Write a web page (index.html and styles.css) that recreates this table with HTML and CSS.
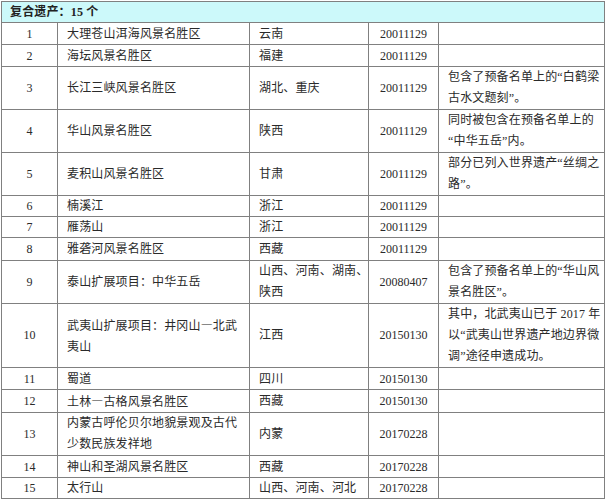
FILE: index.html
```html
<!DOCTYPE html>
<html lang="zh-CN">
<head>
<meta charset="utf-8">
<title>复合遗产</title>
<link rel="stylesheet" href="styles.css">
</head>
<body>
<table class="heritage">
  <colgroup>
    <col class="c-no"><col class="c-name"><col class="c-prov"><col class="c-date"><col class="c-note">
  </colgroup>
  <tr class="head one r21"><th colspan="5">复合遗产：15 个</th></tr>
  <tr class="one r22"><td class="no">1</td><td>大理苍山洱海风景名胜区</td><td>云南</td><td class="date">20011129</td><td></td></tr>
  <tr class="one r22"><td class="no">2</td><td>海坛风景名胜区</td><td>福建</td><td class="date">20011129</td><td></td></tr>
  <tr class="r42"><td class="no">3</td><td>长江三峡风景名胜区</td><td>湖北、重庆</td><td class="date">20011129</td><td>包含了预备名单上的“白鹤梁<br>古水文题刻”。</td></tr>
  <tr class="r42"><td class="no">4</td><td>华山风景名胜区</td><td>陕西</td><td class="date">20011129</td><td>同时被包含在预备名单上的<br>“中华五岳”内。</td></tr>
  <tr class="r43"><td class="no">5</td><td>麦积山风景名胜区</td><td>甘肃</td><td class="date">20011129</td><td>部分已列入世界遗产“丝绸之<br>路”。</td></tr>
  <tr class="one r21"><td class="no">6</td><td>楠溪江</td><td>浙江</td><td class="date">20011129</td><td></td></tr>
  <tr class="one r21"><td class="no">7</td><td>雁荡山</td><td>浙江</td><td class="date">20011129</td><td></td></tr>
  <tr class="one r23"><td class="no">8</td><td>雅砻河风景名胜区</td><td>西藏</td><td class="date">20011129</td><td></td></tr>
  <tr class="r42"><td class="no">9</td><td>泰山扩展项目：中华五岳</td><td>山西、河南、湖南、<br>陕西</td><td class="date">20080407</td><td>包含了预备名单上的“华山风<br>景名胜区”。</td></tr>
  <tr class="r63"><td class="no">10</td><td>武夷山扩展项目：井冈山<span class="cjk">—</span>北武<br>夷山</td><td>江西</td><td class="date">20150130</td><td>其中，北武夷山已于 2017 年<br>以“武夷山世界遗产地边界微<br>调”途径申遗成功。</td></tr>
  <tr class="one r22"><td class="no">11</td><td>蜀道</td><td>四川</td><td class="date">20150130</td><td></td></tr>
  <tr class="one r23"><td class="no">12</td><td>土林<span class="cjk">—</span>古格风景名胜区</td><td>西藏</td><td class="date">20150130</td><td></td></tr>
  <tr class="r42"><td class="no">13</td><td>内蒙古呼伦贝尔地貌景观及古代<br>少数民族发祥地</td><td>内蒙</td><td class="date">20170228</td><td></td></tr>
  <tr class="one r22"><td class="no">14</td><td>神山和圣湖风景名胜区</td><td>西藏</td><td class="date">20170228</td><td></td></tr>
  <tr class="one r21"><td class="no">15</td><td>太行山</td><td>山西、河南、河北</td><td class="date">20170228</td><td></td></tr>
</table>
</body>
</html>
```
FILE: styles.css
```css
html, body {
  margin: 0;
  padding: 0;
  background: #ffffff;
}
body {
  padding: 1px 0 0 1px;
  font-family: "Liberation Serif", "Noto Sans CJK SC", serif;
  font-size: 12px;
  color: #2a2a2a;
}
.heritage {
  border-collapse: collapse;
  table-layout: fixed;
  width: 603px;
}
.c-no { width: 56px; }
.c-name { width: 192px; }
.c-prov { width: 119px; }
.c-date { width: 70px; }
.c-note { width: 166px; }
.heritage th,
.heritage td {
  border: 1px solid #808080;
  padding: 0 0 0 9px;
  line-height: 21px;
  vertical-align: middle;
  text-align: left;
  font-weight: normal;
  letter-spacing: 0.15px;
  white-space: nowrap;
  overflow: hidden;
}
.heritage .one th,
.heritage .one td {
  line-height: 18px;
}
.heritage td.no,
.heritage td.date {
  text-align: center;
  padding: 0;
  letter-spacing: 0;
}
.heritage .head th {
  background: #ccf9fa;
  font-weight: bold;
  color: #222;
  padding-left: 8px;
}
.cjk {
  font-family: "Noto Sans CJK SC", sans-serif;
}
.r21 { height: 21px; }
.r22 { height: 22px; }
.r23 { height: 23px; }
.r42 { height: 42px; }
.r43 { height: 43px; }
.r63 { height: 63px; }
```
